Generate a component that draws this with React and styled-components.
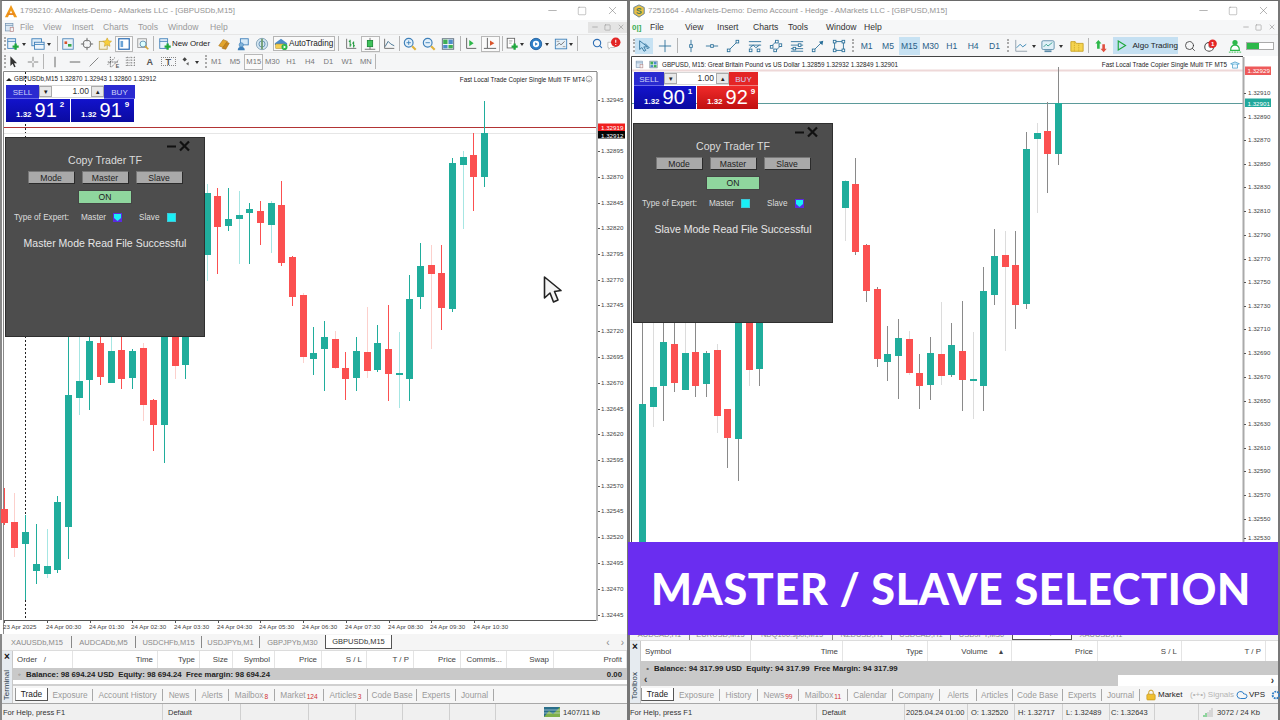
import React from 'react'
import styled, { createGlobalStyle } from 'styled-components'
import { Minus, Square, X, Search, Cloud } from 'lucide-react'

const TEAL = '#20ad9c'
const RED = '#fb5050'
const TEAL_PALE = '#a6e6e3'
const RED_PALE = '#fcd0cc'

// candle rows are [x, high, low, bodyTop, bodyBottom, up?, pale wick?], read off 3x crops
const fromCrop = (rows, ox, oy) => rows.map(([x, h, l, t, b, up, pale]) => ({
  x: ox + x / 3, h: oy + h / 3, l: oy + l / 3, t: oy + t / 3, b: oy + b / 3, up: !!up, pale: !!pale,
}))

const leftEarly = fromCrop([
  [12, 474, 584, 536, 578, 0, 0], [44, 488, 682, 576, 654, 0, 1], [77, 556, 810, 606, 642, 1, 0],
  [109, 582, 762, 702, 722, 1, 0], [141, 598, 744, 708, 732, 1, 1], [173, 498, 728, 516, 720, 1, 0],
  [205, -20, 686, 196, 590, 1, 0], [237, -20, 256, 152, 204, 1, 1], [269, -20, 240, 34, 150, 1, 0],
  [301, -20, 164, 38, 140, 0, 0], [333, -20, 158, 62, 158, 1, 1], [365, -20, 178, 60, 148, 0, 0],
  [397, 56, 178, 62, 144, 1, 0], [429, 40, 272, 54, 226, 0, 1], [461, 208, 364, 210, 284, 0, 0],
  [493, -20, 398, -20, 286, 1, 0], [525, -20, 148, -20, 108, 0, 1], [557, -20, 148, -20, 104, 1, 0],
], 0, 330)

const leftLate = fromCrop([
  [21, 282, 572, 310, 494, 1, 1], [53, 294, 552, 318, 410, 0, 0], [85, 294, 422, 386, 408, 1, 0],
  [117, 304, 522, 374, 386, 1, 1], [149, 340, 522, 356, 370, 1, 0], [181, 334, 466, 362, 398, 0, 0],
  [213, 332, 490, 340, 404, 1, 1], [245, 272, 528, 344, 518, 0, 0], [277, 498, 648, 502, 620, 0, 0],
  [309, 610, 820, 616, 800, 0, 1], [341, 712, 856, 788, 806, 1, 0], [373, 692, 902, 742, 777, 1, 0],
  [405, 724, 838, 747, 833, 0, 1], [437, 786, 930, 834, 867, 0, 0], [469, 742, 904, 782, 864, 1, 0],
  [501, 650, 864, 786, 844, 0, 1], [533, 706, 846, 760, 840, 1, 0], [565, 646, 934, 776, 852, 0, 0],
  [597, 726, 954, 850, 855, 1, 1], [629, 556, 932, 628, 866, 1, 0], [661, 460, 658, 528, 620, 1, 0],
  [693, 464, 778, 526, 552, 0, 1], [725, 464, 720, 550, 654, 0, 0], [757, 204, 666, 220, 658, 1, 0],
  [789, 184, 416, 202, 224, 1, 1], [821, 128, 364, 196, 262, 0, 0], [853, 34, 292, 130, 262, 1, 0],
], 200, 90)

// same bars on the MT5 chart: shifted right and a slightly bigger price scale
const toRight = (y) => 64.7 + 1.148 * (y - 99.7)
const rightEarly = leftEarly.slice(6).map((c) => ({
  ...c, x: c.x + 574, h: toRight(c.h), l: toRight(c.l), t: toRight(c.t), b: toRight(c.b),
}))

const rightLate = fromCrop([
  [15, 360, 543, 364, 443, 1, 1], [47, 294, 585, 372, 576, 0, 0], [79, 552, 726, 556, 692, 0, 0],
  [111, 682, 920, 688, 897, 0, 0], [143, 798, 962, 882, 906, 1, 0], [175, 776, 1016, 834, 888, 1, 0],
  [207, 812, 944, 836, 938, 0, 1], [239, 882, 1048, 940, 978, 0, 0], [271, 830, 1020, 880, 974, 1, 0],
  [303, 726, 974, 882, 948, 0, 1], [335, 790, 952, 854, 946, 1, 0], [367, 724, 1052, 872, 960, 0, 0],
  [399, 816, 1076, 957, 962, 1, 1], [431, 620, 1052, 694, 978, 1, 0], [463, 506, 736, 588, 704, 1, 0],
  [495, 514, 872, 584, 622, 0, 1], [527, 514, 806, 614, 736, 0, 0], [559, 216, 746, 266, 732, 1, 0],
  [591, 190, 458, 218, 236, 1, 1], [623, 126, 398, 212, 282, 0, 0], [655, 20, 316, 130, 282, 1, 0],
], 840, 60)

const leftPrices = [
  ['1.32945', 100], ['1.32895', 151], ['1.32870', 177], ['1.32845', 203], ['1.32820', 228], ['1.32795', 254],
  ['1.32770', 280], ['1.32745', 305], ['1.32720', 331], ['1.32695', 357], ['1.32670', 383], ['1.32645', 409],
  ['1.32620', 434], ['1.32595', 460], ['1.32570', 486], ['1.32545', 511], ['1.32520', 537], ['1.32495', 563],
  ['1.32470', 589], ['1.32445', 615],
]
const rightPrices = [
  ['1.32910', 93], ['1.32890', 117], ['1.32870', 140], ['1.32850', 164], ['1.32830', 187], ['1.32810', 211],
  ['1.32790', 235], ['1.32770', 259], ['1.32750', 282], ['1.32730', 306], ['1.32710', 329], ['1.32690', 353],
  ['1.32670', 377], ['1.32650', 401], ['1.32630', 424], ['1.32610', 448], ['1.32590', 471], ['1.32570', 495],
  ['1.32550', 519], ['1.32530', 538],
]
const leftTimes = [
  ['23 Apr 2025', 3], ['24 Apr 00:30', 46], ['24 Apr 01:30', 89], ['24 Apr 02:30', 131], ['24 Apr 03:30', 174],
  ['24 Apr 04:30', 217], ['24 Apr 05:30', 259], ['24 Apr 06:30', 302], ['24 Apr 07:30', 345], ['24 Apr 08:30', 388],
  ['24 Apr 09:30', 430], ['24 Apr 10:30', 473],
]

const stroke = { fill: 'none', stroke: 'currentColor' }
const pts = (list) => list.map(([x, y], i) => <rect key={i} x={x - 1.5} y={y - 1.5} width="3" height="3" fill="#fff" stroke="currentColor" />)

const ICONS = {
  logoA: <><path d="M8 1 L15 15 H11.5 L8 7.5 L4.5 15 H1 Z" fill="#f09a1a" /><path d="M4 10.5 h8 v2 h-8z" fill="#e8821a" /></>,
  logoS: <><path d="M8 1 L14 4 V11 L8 15 L2 11 V4 Z" fill="#e8c046" stroke="#5d7f9a" /><text x="8" y="11.5" fontSize="10" fontWeight="700" textAnchor="middle" fill="#4b7a5a">S</text></>,
  menuDoc: <><rect x="2" y="2" width="11" height="11" fill="#dbe8f3" stroke="#6f8fae" /><path d="M2 5h11" stroke="#6f8fae" /><rect x="9" y="8" width="5" height="6" fill="#f3f3f3" stroke="#b88" /></>,
  newChart: <><rect x="2" y="2" width="9" height="11" fill="#eaf3fb" stroke="#3e7fb8" /><path d="M2 5h9" stroke="#3e7fb8" /><path d="M11 7.5v7M7.5 11h7" stroke="#1ea83c" strokeWidth="2.6" /></>,
  profiles: <><rect x="1" y="2" width="11" height="8" fill="#dcebf7" stroke="#3e7fb8" /><rect x="4" y="6" width="11" height="8" fill="#eef6fc" stroke="#3e7fb8" /><path d="M4 8.5h11" stroke="#3e7fb8" /></>,
  market: <><rect x="2" y="2" width="12" height="12" fill="#e8f1f8" stroke="#4d86b8" /><rect x="4" y="5" width="3" height="3" fill="#d9542b" /><rect x="8" y="8" width="4" height="3" fill="#38a84a" /></>,
  crosshair: <g {...stroke} color="#666"><circle cx="8" cy="8" r="4.5" /><path d="M8 1v4M8 11v4M1 8h4M11 8h4" /></g>,
  navigator: <><rect x="1.5" y="5" width="9" height="9" fill="#f5f0d8" stroke="#b9a35a" /><path d="M10.5 1l1.6 3.4 3.4.4-2.5 2.4.7 3.5-3.2-1.8-3.2 1.8.7-3.5L5.5 4.8l3.4-.4z" fill="#f7cf3d" stroke="#c79a1e" strokeWidth=".6" /></>,
  terminal: <><rect x="2" y="2" width="12" height="12" fill="#fff" stroke="#2f6fb5" strokeWidth="1.4" /><rect x="4" y="4.5" width="3" height="7" fill="#6aa3d6" /></>,
  tester: <><rect x="2" y="2" width="10" height="10" fill="#f0f0f0" stroke="#999" /><circle cx="8" cy="8" r="3.4" fill="#dff" stroke="#5c8fb0" /><path d="M10.5 10.5l3.5 3.5" stroke="#d6a73a" strokeWidth="2" /></>,
  gold: <><path d="M2 10l5-7 5 2-5 7z" fill="#e3a52e" stroke="#a8721a" strokeWidth=".7" /><path d="M6 13l5-7 3 1-4 7z" fill="#c9861e" stroke="#a8721a" strokeWidth=".7" /></>,
  chat: <><rect x="5" y="2" width="9" height="7" fill="#d6e9f7" stroke="#3e7fb8" /><circle cx="6" cy="9" r="2.5" fill="#7fb2d9" stroke="#3e7fb8" strokeWidth=".7" /><path d="M2 15c0-3 2-4 4-4s4 1 4 4z" fill="#3e7fb8" /></>,
  signal: <><circle cx="8" cy="8" r="6.5" fill="#d4e6f2" stroke="#7f9fb5" /><circle cx="8" cy="8" r="3.5" fill="none" stroke="#5b8ab0" /><path d="M8 2v12" stroke="#6d9a6d" strokeWidth="2" /></>,
  auto: <><path d="M1 7l7-5 7 5v2H1z" fill="#4d8cc9" /><rect x="2" y="8" width="10" height="5" fill="#f3cf55" stroke="#b08a20" strokeWidth=".6" /><circle cx="12" cy="11.5" r="3.5" fill="#2db84a" /><path d="M11 9.8l2.8 1.7-2.8 1.7z" fill="#fff" /></>,
  bars: <><path d="M3 2v11h11" fill="none" stroke="#666" /><path d="M7 3v8M5.5 5H7M7 9h1.5M11 5v7M9.5 7H11M11 10h1.5" stroke="#1f9a3c" strokeWidth="1.2" fill="none" /></>,
  candles: <><path d="M2 14h12M8 1v13" stroke="#666" fill="none" /><rect x="5" y="4" width="6" height="7" fill="#3fc25a" stroke="#1d8a38" /></>,
  line: <><path d="M3 2v11h11" fill="none" stroke="#666" /><path d="M3.5 11 L7 5 L10 8 L14 10" fill="none" stroke="#3a6a8a" /></>,
  zoomIn: <><circle cx="6.5" cy="6.5" r="5" fill="#e3f1fb" stroke="#3e7fb8" strokeWidth="1.3" /><path d="M4 6.5h5M6.5 4v5" stroke="#3e7fb8" /><path d="M10.5 10.5l4 4" stroke="#e0b23a" strokeWidth="2.4" /></>,
  zoomOut: <><circle cx="6.5" cy="6.5" r="5" fill="#e3f1fb" stroke="#3e7fb8" strokeWidth="1.3" /><path d="M4 6.5h5" stroke="#3e7fb8" /><path d="M10.5 10.5l4 4" stroke="#e0b23a" strokeWidth="2.4" /></>,
  tile: <><rect x="1.5" y="2" width="13" height="12" fill="#fff" stroke="#567" /><rect x="2.5" y="3" width="5" height="5" fill="#3fae55" /><rect x="8.5" y="3" width="5" height="5" fill="#4d8cc9" /><rect x="2.5" y="9" width="5" height="4" fill="#4d8cc9" /><rect x="8.5" y="9" width="5" height="4" fill="#3fae55" /></>,
  scroll: <><path d="M3 1v12h11" fill="none" stroke="#555" /><path d="M6 3.5l5 3.5-5 3.5z" fill="#2db84a" /></>,
  shift: <><path d="M5 1v12h10M1 13h4" fill="none" stroke="#555" /><path d="M8 4l5 3-5 3z" fill="#d9542b" /></>,
  template: <><rect x="2.5" y="1.5" width="8.5" height="11" fill="#fff" stroke="#666" /><path d="M4.5 4.5h4M4.5 7h3" stroke="#999" /><path d="M11 7.5v7M7.5 11h7" stroke="#1ea83c" strokeWidth="2.6" /></>,
  clock: <><circle cx="8" cy="8" r="6.5" fill="#2f7fc7" stroke="#1f5f9f" /><circle cx="8" cy="8" r="3.6" fill="#fff" /><path d="M7 6l3 2-3 2z" fill="#2f7fc7" /></>,
  indicator: <><rect x="1.5" y="2.5" width="13" height="11" fill="#e4eff7" stroke="#3e7fb8" /><path d="M3 10l3-3 2 2 4-4" fill="none" stroke="#666" /><path d="M3 5h3M10 11h3" stroke="#999" /></>,
  alert: <><path d="M1 6h8v6H4l-2 2v-2H1z" fill="#fff" stroke="#bbb" /><circle cx="10" cy="6" r="5.4" fill="#e32626" /><path d="M10 3v3.6M10 8v1" stroke="#fff" strokeWidth="1.2" /></>,
  arrow: <path d="M5 1.5v11l2.6-2.4 1.8 4 1.6-.8-1.8-3.8h3.4z" fill="#333" />,
  cross: <path d="M8 2v5M8 9v5M2 8h5M9 8h5" stroke="#777" fill="none" />,
  vline: <path d="M8 2v12" stroke="#555" fill="none" />,
  hline: <path d="M2 8h12" stroke="#555" fill="none" />,
  trend: <path d="M3 13L13 3" stroke="#777" fill="none" />,
  channel: <><path d="M2 11L10 3M6 14L14 6M5 2v12M2 8h12" stroke="#555" fill="none" strokeDasharray="1.5 1" /><text x="11" y="15" fontSize="6" fontWeight="700" fill="#555">E</text></>,
  fibo: <path d="M2 3h12M2 6h12M2 9h12M2 12h12M4 2v12M8 2v12M12 2v12" stroke="#888" fill="none" strokeDasharray="1.5 1.5" />,
  shapes: <><path d="M4 5l2.5-2.5L9 5 6.5 7.5z" fill="#444" /><path d="M8 10l3-2v4z" fill="#666" /></>,
  blueCursor: <path d="M3 2v10l2.6-2.2L8 14l2-1-2.2-4H12z M9 5l5 5-3 1" fill="#bfe0f4" stroke="#2a6f99" />,
  blueCross: <path d="M8 1v14M1 8h14" stroke="#2a6f99" fill="none" />,
  vPoint: <g color="#2a6f99"><path d="M8 1v14" stroke="currentColor" />{pts([[8, 8]])}</g>,
  hPoint: <g color="#2a6f99"><path d="M1 8h14" stroke="currentColor" />{pts([[8, 8]])}</g>,
  trendPoint: <g color="#2a6f99"><path d="M3 13L13 3" stroke="currentColor" />{pts([[3, 13], [13, 3]])}</g>,
  channelPoint: <g color="#2a6f99"><path d="M1 3h14M1 7h14" stroke="currentColor" /><path d="M2 10l4-3 3 3 4-3" fill="none" stroke="currentColor" />{pts([[3, 13], [12, 13]])}</g>,
  fiboPoint: <g color="#2a6f99"><path d="M2 9L9 2M7 14l7-7" stroke="currentColor" />{pts([[3, 9], [9, 3], [7, 13], [13, 7]])}</g>,
  linesPoint: <g color="#2a6f99"><path d="M1 3h14M1 7h14M1 11h14M1 14h14" stroke="currentColor" />{pts([[11, 7], [5, 11]])}</g>,
  arrowPoint: <g color="#2a6f99"><path d="M3 13L13 3" stroke="currentColor" /><path d="M14 2l-5 1 4 4z" fill="currentColor" />{pts([[3, 13]])}</g>,
  rectPoint: <g color="#2a6f99"><rect x="3" y="3" width="10" height="10" fill="none" stroke="currentColor" />{pts([[3, 3], [13, 3], [3, 13], [13, 13]])}</g>,
  chartLine: <><path d="M2 1v13h13" fill="none" stroke="#8a9aa8" /><path d="M3 10l4-4 3 3 4-3" fill="none" stroke="#2a7fb0" /></>,
  chartBox: <><rect x="1" y="2" width="14" height="10" rx="1.5" fill="#e0f0f7" stroke="#5a8aa8" /><path d="M3 9l3-3 2 2 5-4" fill="none" stroke="#2f9a8a" /><path d="M4 14h8" stroke="#5a8aa8" strokeWidth="2" /></>,
  folder: <><path d="M1 3h5l1 2h8v9H1z" fill="#f5d44f" stroke="#c7a022" /><path d="M5 3v11M10 5v9" stroke="#c7a022" strokeDasharray="1 1" /></>,
  updown: <><path d="M5 1l3.5 4H6.5v6H3.5V5H1.5z" fill="#2db84a" /><path d="M11 15l-3.5-4h2V6h3v5h2z" fill="#e05040" /></>,
  playOut: <path d="M4 2.5l9 5.5-9 5.5z" fill="none" stroke="#1ea83c" strokeWidth="1.4" />,
  bell: <><circle cx="7" cy="9" r="5" fill="#fff" stroke="#444" strokeWidth="1.2" /><path d="M7 6.5V9l2 1" fill="none" stroke="#444" /><circle cx="11" cy="5.5" r="4.8" fill="#e32626" /><text x="11" y="8" fontSize="7" fontWeight="700" textAnchor="middle" fill="#fff">1</text></>,
  user: <><circle cx="8" cy="4" r="3" fill="#2db84a" /><path d="M3 13c0-4 2-6 5-6s5 2 5 6z" fill="#fff" stroke="#2db84a" strokeWidth="1.4" /><path d="M1 15h14" stroke="#2db84a" strokeDasharray="2 1" /></>,
  hat: <><path d="M1 6l7-3 7 3-7 3z" fill="#bfe3f5" stroke="#2f8fc0" /><path d="M4 8v5h8V8" fill="#eef8fd" stroke="#2f8fc0" /></>,
  smile: <g {...stroke} color="#555"><circle cx="8" cy="8" r="6" /><path d="M5 10c1.5 1.5 4.5 1.5 6 0M5.5 6h1M9.5 6h1" /></g>,
  bag: <><path d="M5 7V4.5a3 3 0 0 1 6 0V7" fill="none" stroke="#c79a1e" strokeWidth="1.3" /><rect x="2.5" y="7" width="11" height="7.5" rx="1" fill="#f0c030" stroke="#c79a1e" /></>,
  gear: <circle cx="8" cy="8" r="4.5" fill="none" stroke="#2f7fc7" strokeWidth="2.5" strokeDasharray="2.5 1.2" />,
  traffic: <><rect x="0" y="3" width="16" height="10" fill="#2a6f8a" /><path d="M0 13l5-6 4 3 7-7v10z" fill="#7fb04a" /><path d="M0 6h16M0 9h16" stroke="#d8e8f0" strokeWidth=".6" /></>,
}

const Icon = ({ name, size = 14 }) => (
  <svg width={size} height={size} viewBox="0 0 16 16">{ICONS[name]}</svg>
)

function CandleSet({ data, wickUp, wickDown, paleUp, paleDown }) {
  return data.map((c, i) => {
    const wick = c.pale ? (c.up ? paleUp : paleDown) : (c.up ? wickUp : wickDown)
    const cx = Math.floor(c.x) + 0.5
    const top = Math.round(c.t)
    return (
      <g key={i}>
        <line x1={cx} x2={cx} y1={Math.round(c.h)} y2={Math.round(c.l)} stroke={wick} />
        <rect x={cx - 3.5} y={top} width="7" height={Math.max(Math.round(c.b) - top, 1)} fill={c.up ? TEAL : RED} />
      </g>
    )
  })
}

const Axis = styled.text`
  font-family: "Liberation Sans", Arial, sans-serif;
  font-size: 6.2px;
  fill: ${(p) => p.$fill || '#444'};
`
const ChartText = styled.text`
  font-family: "Liberation Sans", Arial, sans-serif;
  font-size: 6.3px;
  fill: #222;
`

function LeftChart() {
  return (
    <ChartSvg $ml={-2} width="629" height="564" viewBox="0 70 629 564">
      <path d="M3.5 634V71.5H597" fill="none" stroke="#8a8a8a" />
      <line x1="25.5" x2="25.5" y1="72" y2="620" stroke="#222" strokeDasharray="2 2" />
      <line x1="4" x2="597" y1="133.5" y2="133.5" stroke="#e6e6e6" />
      <line x1="4" x2="597" y1="127.5" y2="127.5" stroke="#b23434" />
      <CandleSet data={[...leftEarly, ...leftLate]} wickUp={TEAL} wickDown={RED} paleUp={TEAL_PALE} paleDown={RED_PALE} />
      <rect x="0" y="620" width="3" height="14" fill="#fff" />
      <rect x="4" y="620.5" width="593" height="14" fill="#fff" />
      <line x1="4" x2="598" y1="620.5" y2="620.5" stroke="#555" />
      <line x1="597" x2="597" y1="72" y2="621" stroke="#b8b8b8" strokeWidth="2" />
      {leftPrices.map(([p, y]) => (
        <g key={p}>
          <line x1="598" x2="600" y1={y + 0.5} y2={y + 0.5} stroke="#555" />
          <Axis x="601" y={y + 2.4}>{p}</Axis>
        </g>
      ))}
      {leftTimes.map(([t, x]) => (
        <g key={t}>
          <line x1={x + 1.5} x2={x + 1.5} y1="620" y2="623" stroke="#555" />
          <Axis x={x} y="629">{t}</Axis>
        </g>
      ))}
      <rect x="598" y="123.5" width="27" height="7.5" fill="#f01f1f" />
      <Axis x="601" y="130" $fill="#fff">1.32919</Axis>
      <rect x="598" y="131" width="27" height="7.5" fill="#050505" />
      <Axis x="601" y="137.5" $fill="#fff">1.32912</Axis>
      <path d="M6 81l3-3 3 3z" fill="#222" />
      <ChartText x="14" y="81">GBPUSDb,M15  1.32870 1.32943 1.32860 1.32912</ChartText>
      <ChartText x="585" y="82" textAnchor="end">Fast Local Trade Copier Single Multi TF MT4</ChartText>
      <g transform="translate(585 75)"><Icon name="smile" size={8} /></g>
      <path d="M544.5 277 L544.5 298 L550 293 L553.5 302 L558 300 L554.5 291.5 L561 290.5 Z" fill="#f4f4f4" stroke="#222" strokeWidth="1.6" strokeLinejoin="round" />
    </ChartSvg>
  )
}

function RightChart() {
  return (
    <ChartSvg width="649" height="572" viewBox="630 56 649 572">
      <path d="M631.5 628V56.5H1243" fill="none" stroke="#444" />
      <rect x="632" y="69.5" width="611" height="2" fill="#eed8d8" />
      <line x1="632" x2="1243" y1="103.5" y2="103.5" stroke="#5b9a9a" />
      <CandleSet data={[...rightEarly, ...rightLate]} wickUp="#8a8a8a" wickDown="#8a8a8a" paleUp="#dcdcdc" paleDown="#dcdcdc" />
      <line x1="1243.5" x2="1243.5" y1="57" y2="628" stroke="#aaa" strokeWidth="2" />
      {rightPrices.map(([p, y]) => (
        <g key={p}>
          <line x1="1244" x2="1246" y1={y + 0.5} y2={y + 0.5} stroke="#555" />
          <Axis x="1248" y={y + 2.4}>{p}</Axis>
        </g>
      ))}
      <rect x="1245" y="66.5" width="26" height="8.5" fill="#ee5a5a" />
      <Axis x="1247.5" y="73" $fill="#fff">1.32929</Axis>
      <rect x="1245" y="98.5" width="26" height="8.5" fill="#20a89b" />
      <Axis x="1247.5" y="105.5" $fill="#fff">1.32901</Axis>
      <g transform="translate(635 60)"><Icon name="menuDoc" size={9} /></g>
      <g transform="translate(649 60)"><Icon name="tile" size={9} /></g>
      <ChartText x="662" y="67">GBPUSD, M15:  Great Britain Pound vs US Dollar  1.32859 1.32932 1.32849 1.32901</ChartText>
      <ChartText x="1227" y="67" textAnchor="end">Fast Local Trade Copier Single Multi TF MT5</ChartText>
      <g transform="translate(1230 60)"><Icon name="hat" size={10} /></g>
    </ChartSvg>
  )
}

function TradeBox({ x, y, sellTab, buyTab, step, sell, buy, sellW, buyW, buyRed }) {
  return (
    <TradeWrap $x={x} $y={y}>
      <TradeTop>
        <SideTab $w={sellTab}>SELL</SideTab>
        <Stepper $w={step}>
          <StepBtn>▾</StepBtn>
          <StepVal>1.00</StepVal>
          <StepBtn>▴</StepBtn>
        </Stepper>
        <SideTab $w={buyTab} $red={buyRed}>BUY</SideTab>
      </TradeTop>
      <TradeBottom>
        <PriceCell $w={sellW}><small>1.32</small><big>{sell[0]}</big><sup>{sell[1]}</sup></PriceCell>
        <PriceCell $w={buyW} $red={buyRed}><small>1.32</small><big>{buy[0]}</big><sup>{buy[1]}</sup></PriceCell>
      </TradeBottom>
    </TradeWrap>
  )
}

const Mark = ({ on }) => (
  <svg width="9" height="9" viewBox="0 0 9 9">
    <rect width="9" height="9" fill={on ? '#5a2be0' : '#3ec8d8'} />
    {on
      ? <path d="M1 1h7v4L4.5 8 1 5z" fill="#19f0f5" />
      : <rect x="1" y="1" width="7" height="7" fill="#19f0f5" />}
  </svg>
)

function CopyPanel({ x, y, mode }) {
  const master = mode === 'Master'
  return (
    <Panel $x={x} $y={y}>
      <PanelHead>
        <svg width="24" height="12" viewBox="0 0 24 12">
          <path d="M0 6.5h9" stroke="#111" strokeWidth="2" />
          <path d="M13 1.5l9 9M22 1.5l-9 9" stroke="#111" strokeWidth="2.2" />
        </svg>
      </PanelHead>
      <PanelTitle>Copy Trader TF</PanelTitle>
      <PanelBtns>
        <PanelBtn>Mode</PanelBtn>
        <PanelBtn>Master</PanelBtn>
        <PanelBtn>Slave</PanelBtn>
      </PanelBtns>
      <OnBtn>ON</OnBtn>
      <TypeRow>
        <TypeLabel $w={67}>Type of Expert:</TypeLabel>
        <TypeLabel $w={32}>Master</TypeLabel>
        <Mark on={master} />
        <TypeLabel $w={28} $ml={17}>Slave</TypeLabel>
        <Mark on={!master} />
      </TypeRow>
      <PanelMsg>{mode} Mode Read File Successful</PanelMsg>
    </Panel>
  )
}

const Tool = ({ i, w = 19, on, ml, blue }) => (
  <ToolBtn $w={w} $on={on} $ml={ml} $blue={blue}><Icon name={i} /></ToolBtn>
)

const WinButtons = () => (
  <WinControls>
    <WinBtn><Minus size={13} strokeWidth={1} /></WinBtn>
    <WinBtn><Square size={10} strokeWidth={1} /></WinBtn>
    <WinBtn><X size={13} strokeWidth={1} /></WinBtn>
  </WinControls>
)

const leftTabs = [['Exposure', 45], ['Account History', 70], ['News', 33], ['Alerts', 33], ['Mailbox', 46, '8'], ['Market', 49, '124'], ['Articles', 44, '3'], ['Code Base', 49], ['Experts', 39], ['Journal', 38]]
const rightTabs = [['Exposure', 46], ['History', 38], ['News', 41, '99'], ['Mailbox', 49, '11'], ['Calendar', 45], ['Company', 47], ['Alerts', 37], ['Articles', 36], ['Code Base', 50], ['Experts', 39], ['Journal', 38]]

function TermTabs({ tabs, pad, children }) {
  return (
    <TermTabRow $pad={pad}>
      <TermTab $on $w={33}>Trade</TermTab>
      {tabs.map(([t, w, badge]) => (
        <TermTab key={t} $w={w}>{t}{badge && <Badge>{badge}</Badge>}</TermTab>
      ))}
      {children}
    </TermTabRow>
  )
}

const leftCols = [['Order   /', 60, 'left'], ['Time', 85], ['Type', 42], ['Size', 33], ['Symbol', 42], ['Price', 47], ['S / L', 45], ['T / P', 47], ['Price', 47], ['Commis...', 46], ['Swap', 47], ['Profit', 73]]
const rightCols = [['Symbol', 110, 'left'], ['Time', 92], ['Type', 85], ['Volume     ▴  ', 84], ['Price', 86], ['S / L', 84], ['T / P', 84]]

const HeadRow = ({ cols, h }) => (
  <TermHead $h={h}>
    {cols.map(([t, w, align], i) => <HeadCell key={i} $w={w} $left={align === 'left'}>{t}</HeadCell>)}
  </TermHead>
)

export default function App() {
  return (
    <Desktop>
      <GlobalStyle />
      <Win $w={629}>
        <TitleBar>
          <Icon name="logoA" size={14} />
          <TitleText>1795210: AMarkets-Demo - AMarkets LLC - [GBPUSDb,M15]</TitleText>
          <WinButtons />
        </TitleBar>
        <MenuBar>
          <Icon name="menuDoc" size={11} />
          <MenuItem $ml={5} $w={23}>File</MenuItem><MenuItem $w={29}>View</MenuItem><MenuItem $w={31}>Insert</MenuItem>
          <MenuItem $w={35}>Charts</MenuItem><MenuItem $w={30}>Tools</MenuItem><MenuItem $w={42}>Window</MenuItem><MenuItem $w={30}>Help</MenuItem>
          <Mdi>
            <MdiBtn $dark><Minus size={8} /></MdiBtn><MdiBtn $dark><Square size={7} /></MdiBtn><MdiBtn $dark><X size={8} /></MdiBtn>
          </Mdi>
        </MenuBar>
        <ToolRow $h={18}>
          <Grip />
          <Tool i="newChart" w={14} /><Caret />
          <Tool i="profiles" w={14} ml={3} /><Caret />
          <Sep $l={4} $r={1} />
          <Tool i="market" w={18.6} /><Tool i="crosshair" w={18.6} /><Tool i="navigator" w={18.6} /><Tool i="terminal" w={18.6} on /><Tool i="tester" w={18.6} />
          <Sep $l={1} $r={4} />
          <Tool i="newChart" w={14} /><ToolLabel $w={43}>New Order</ToolLabel>
          <Tool i="gold" /><Tool i="chat" /><Tool i="signal" />
          <AutoBtn><Icon name="auto" /><span>AutoTrading</span></AutoBtn>
          <Sep $l={3} $r={3} />
          <Tool i="bars" /><Tool i="candles" on /><Tool i="line" />
          <Sep $l={0} $r={1} />
          <Tool i="zoomIn" /><Tool i="zoomOut" /><Tool i="tile" />
          <Sep $l={2} $r={1} />
          <Tool i="scroll" /><Tool i="shift" on />
          <Sep $l={2} $r={3} />
          <Tool i="template" w={13} /><Caret $w={6} />
          <Tool i="clock" w={13} ml={5} /><Caret />
          <Tool i="indicator" w={13} ml={4} /><Caret $w={7} />
          <Sep $l={2} $r={0} />
          <RightTools>
            <IconSlot $w={16}><Search size={11} color="#2f6fb5" strokeWidth={2.4} /></IconSlot>
            <Tool i="alert" w={18} />
          </RightTools>
        </ToolRow>
        <ToolRow $h={18}>
          <Grip />
          <Tool i="arrow" w={14} /><Tool i="cross" ml={3.5} />
          <Sep $l={0} $r={2} />
          <Tool i="vline" /><Tool i="hline" ml={1} /><Tool i="trend" /><Tool i="channel" w={18} /><Tool i="fibo" />
          <LetterBtn>A</LetterBtn>
          <LetterBtn $box>T</LetterBtn>
          <Tool i="shapes" w={15} ml={0.5} /><Caret $w={7} />
          <Grip $ml={5} />
          {['M1', 'M5', 'M15', 'M30', 'H1', 'H4', 'D1', 'W1', 'MN'].map((p) => (
            <Period key={p} $w={18.7} $on={p === 'M15'}>{p}</Period>
          ))}
          <Sep $l={0} $r={0} />
        </ToolRow>
        <ChartArea>
          <LeftChart />
          <TradeBox x={4} y={15} sellTab={33} step={65} buyTab={31} sellW={64} buyW={63} sell={['91', '2']} buy={['91', '9']} />
          <CopyPanel x={3} y={67} mode="Master" />
        </ChartArea>
        <SymbolTabs $h={17}>
          <SymbolTab $w={69} $ml={1}>XAUUSDb,M15</SymbolTab>
          <SymbolTab $w={64}>AUDCADb,M5</SymbolTab>
          <SymbolTab $w={66}>USDCHFb,M15</SymbolTab>
          <SymbolTab $w={58}>USDJPYb,M1</SymbolTab>
          <SymbolTab $w={65} $plain>GBPJPYb,M30</SymbolTab>
          <SymbolTab $w={67} $on>GBPUSDb,M15</SymbolTab>
          <TabArrows>‹&nbsp;&nbsp;&nbsp;&nbsp;›</TabArrows>
        </SymbolTabs>
        <TermBody>
          <SideBar $w={9}>×<SideLabel>Terminal</SideLabel></SideBar>
          <TermMain>
            <HeadRow cols={leftCols} h={17} />
            <BalanceRow $h={12}>
              <Dot $w={13}>◦</Dot>Balance: 98 694.24 USD&nbsp; Equity: 98 694.24&nbsp; Free margin: 98 694.24
              <BalanceEnd>0.00</BalanceEnd>
            </BalanceRow>
            <TermGap />
            <TermTabs tabs={leftTabs} pad={2} />
          </TermMain>
        </TermBody>
        <StatusBar>
          <StatusCell $w={161} $pad={1}>For Help, press F1</StatusCell>
          <StatusCell $w={78} $pad={5}>Default</StatusCell>
          <StatusCell $w={68} /><StatusCell $w={47} /><StatusCell $w={47} /><StatusCell $w={47} /><StatusCell $w={46} />
          <StatusLast><Icon name="traffic" size={16} /><span>1407/11 kb</span></StatusLast>
        </StatusBar>
      </Win>

      <Win $w={651} $right>
        <TitleBar>
          <Icon name="logoS" size={14} />
          <TitleText>7251664 - AMarkets-Demo: Demo Account - Hedge - AMarkets LLC - [GBPUSD,M15]</TitleText>
          <WinButtons />
        </TitleBar>
        <MenuBar $dark>
          <MenuLogo>0|]</MenuLogo>
          <MenuItem $ml={7} $w={35}>File</MenuItem><MenuItem $w={32}>View</MenuItem><MenuItem $w={36}>Insert</MenuItem>
          <MenuItem $w={35}>Charts</MenuItem><MenuItem $w={38}>Tools</MenuItem><MenuItem $w={38}>Window</MenuItem><MenuItem $w={30}>Help</MenuItem>
          <Mdi><MdiBtn><Minus size={8} /></MdiBtn><MdiBtn><Square size={7} /></MdiBtn><MdiBtn><X size={8} /></MdiBtn></Mdi>
        </MenuBar>
        <ToolRow $h={22} $pad={2}>
          <Grip $mr={0} />
          <Tool i="blueCursor" w={18} blue /><Tool i="blueCross" w={21} ml={1.5} />
          <Sep $l={1} $r={3} />
          <Tool i="vPoint" w={21.2} /><Tool i="hPoint" w={21.2} /><Tool i="trendPoint" w={21.2} /><Tool i="channelPoint" w={21.2} />
          <Tool i="fiboPoint" w={21.2} /><Tool i="linesPoint" w={21.2} /><Tool i="arrowPoint" w={21.2} /><Tool i="rectPoint" w={21.2} />
          <Grip $ml={2} $mr={2} />
          {['M1', 'M5', 'M15', 'M30', 'H1', 'H4', 'D1'].map((p) => (
            <Period key={p} $big $w={21.3} $blue={p === 'M15'}>{p}</Period>
          ))}
          <Grip $ml={2} />
          <Tool i="chartLine" w={16} ml={4.4} /><Caret $w={10} />
          <Tool i="chartBox" w={16} ml={1} /><Caret $w={10} />
          <Tool i="folder" w={18} ml={2} />
          <Sep $l={2} $r={3} />
          <Tool i="updown" w={18} />
          <AlgoBtn><Icon name="playOut" size={13} /><span>Algo Trading</span></AlgoBtn>
          <IconSlot $w={24}><Search size={12} color="#333" strokeWidth={1.6} /></IconSlot>
          <Tool i="bell" w={16} />
          <Tool i="user" w={18} ml={8} />
          <Meter><MeterFill /></Meter>
        </ToolRow>
        <ChartArea>
          <RightChart />
          <TradeBox x={4} y={16} sellTab={30} step={65} buyTab={29} sellW={62} buyW={61} buyRed sell={['90', '1']} buy={['92', '9']} />
          <CopyPanel x={3} y={67} mode="Slave" />
        </ChartArea>
        <SymbolTabs $h={13} $low>
          <SymbolTab $w={60}>AUDCAD,H1</SymbolTab>
          <SymbolTab $w={62}>EURUSD,M15</SymbolTab>
          <SymbolTab $w={81}>NDQ100.spot,M15</SymbolTab>
          <SymbolTab $w={59}>NZDUSD,H1</SymbolTab>
          <SymbolTab $w={59}>USDCAD,H1</SymbolTab>
          <SymbolTab $w={61} $plain>USDJPY,M30</SymbolTab>
          <SymbolTab $w={60} $on>GBPUSD,M15</SymbolTab>
          <SymbolTab $w={58} $plain>XAUUSD,H1</SymbolTab>
        </SymbolTabs>
        <TermBody>
          <SideBar $w={10}>×<SideLabel>Toolbox</SideLabel></SideBar>
          <TermMain>
            <HeadRow cols={rightCols} h={20} />
            <BalanceRow $h={14}>
              <Dot $w={13}>•</Dot>Balance: 94 317.99 USD&nbsp; Equity: 94 317.99&nbsp; Free Margin: 94 317.99
            </BalanceRow>
            <ScrollRow>
              <ScrollThumb>‹</ScrollThumb>
              <ScrollEnd>›</ScrollEnd>
            </ScrollRow>
            <TermTabs tabs={rightTabs} pad={0}>
              <ExtraLinks>
                <ExtraLink $w={45}><Icon name="bag" size={12} /><b>Market</b></ExtraLink>
                <ExtraLink $w={46} $faint>(•+•) Signals</ExtraLink>
                <ExtraLink $w={34}><Cloud size={12} color="#2f7fc7" /><b>VPS</b></ExtraLink>
                <Icon name="gear" size={12} />
              </ExtraLinks>
            </TermTabs>
          </TermMain>
        </TermBody>
        <StatusBar>
          <StatusCell $w={187} $pad={0}>For Help, press F1</StatusCell>
          <StatusCell $w={88} $pad={5}>Default</StatusCell>
          <StatusCell $w={63} $pad={1}>2025.04.24 01:00</StatusCell>
          <StatusCell $w={47}>O: 1.32520</StatusCell>
          <StatusCell $w={48}>H: 1.32717</StatusCell>
          <StatusCell $w={47}>L: 1.32489</StatusCell>
          <StatusCell $w={45} $pad={1}>C: 1.32643</StatusCell>
          <StatusCell $w={44} />
          <StatusLast $start>
            <svg width="11" height="9" viewBox="0 0 11 9"><path d="M1 9V7M3 9V5" stroke="#2db84a" /><path d="M5 9V4M7 9V2M9 9V0" stroke="#bbb" /></svg>
            <span>3072 / 24 Kb</span>
          </StatusLast>
        </StatusBar>
      </Win>

      <Banner>MASTER / SLAVE SELECTION</Banner>
    </Desktop>
  )
}

const GlobalStyle = createGlobalStyle`
  html, body {
    margin: 0;
    padding: 0;
    width: 1280px;
    height: 720px;
    overflow: hidden;
    background: #fff;
    font-family: "Liberation Sans", Arial, sans-serif;
  }
`

const Desktop = styled.div`
  position: relative;
  display: flex;
  width: 1280px;
  height: 720px;
  overflow: hidden;
  font-size: 9px;
  color: #555;
`

const Win = styled.div`
  display: flex;
  flex-direction: column;
  width: ${(p) => p.$w}px;
  height: 720px;
  box-sizing: border-box;
  border-top: 1px solid #6a6a6a;
  border-left: ${(p) => (p.$right ? '1px solid #777' : '2px solid #888')};
  border-right: 2px solid #777;
`

const TitleBar = styled.div`
  display: flex;
  align-items: center;
  flex: 0 0 19px;
  padding-left: 2px;
  background: #fff;
`

const TitleText = styled.span`
  margin-left: 2px;
  font-size: 7.9px;
  color: #949494;
  white-space: nowrap;
`

const WinControls = styled.div`
  display: flex;
  margin-left: auto;
  color: #777;
`

const WinBtn = styled.span`
  display: flex;
  align-items: center;
  justify-content: center;
  width: 30px;
`

const MenuBar = styled.div`
  display: flex;
  align-items: center;
  flex: 0 0 14px;
  padding-left: 2px;
  background: #f6f7f8;
  color: ${(p) => (p.$dark ? '#333' : '#9a9a9a')};
`

const MenuLogo = styled.span`
  font-size: 8px;
  color: #3fae55;
  font-weight: 700;
  width: 11px;
`

const MenuItem = styled.span`
  width: ${(p) => p.$w}px;
  margin-left: ${(p) => p.$ml || 0}px;
  font-size: 8.6px;
`

const Mdi = styled.div`
  display: flex;
  margin-left: auto;
  height: 100%;
  align-items: center;
`

const MdiBtn = styled.span`
  display: flex;
  align-items: center;
  justify-content: center;
  width: 13px;
  height: 11px;
  color: #999;
  background: ${(p) => (p.$dark ? '#e4e4e4' : 'transparent')};
`

const ToolRow = styled.div`
  display: flex;
  align-items: center;
  flex: 0 0 ${(p) => p.$h}px;
  padding-left: ${(p) => p.$pad || 1}px;
  background: #f5f6f7;
  border-top: 1px solid #e6e6e6;
  box-sizing: border-box;
`

const Grip = styled.i`
  flex: 0 0 2px;
  height: 13px;
  margin: 0 ${(p) => p.$mr || 0}px 0 ${(p) => p.$ml || 1}px;
  border-left: 2px dotted #aaa;
  box-sizing: border-box;
`

const ToolBtn = styled.span`
  display: flex;
  align-items: center;
  justify-content: center;
  flex: 0 0 ${(p) => p.$w}px;
  min-width: 0;
  height: 16px;
  margin-left: ${(p) => p.$ml || 0}px;
  box-sizing: border-box;
  border: 1px solid ${(p) => (p.$on ? '#b8b8b8' : 'transparent')};
  background: ${(p) => (p.$blue ? '#c7e2f3' : p.$on ? '#fafafa' : 'transparent')};
  svg {
    flex: none;
  }
`

const IconSlot = styled.span`
  display: flex;
  align-items: center;
  justify-content: center;
  flex: 0 0 ${(p) => p.$w}px;
`

const Caret = styled.span`
  flex: 0 0 ${(p) => p.$w || 8}px;
  display: flex;
  align-items: center;
  justify-content: center;
  &::after {
    content: "";
    border: 2.5px solid transparent;
    border-top: 3px solid #333;
    margin-top: 3px;
  }
`

const Sep = styled.i`
  flex: 0 0 1px;
  height: 15px;
  margin: 0 ${(p) => p.$r}px 0 ${(p) => p.$l}px;
  background: #b5b5b5;
`

const ToolLabel = styled.span`
  flex: 0 0 ${(p) => p.$w}px;
  font-size: 7.9px;
  color: #222;
  white-space: nowrap;
`

const AutoBtn = styled.span`
  display: flex;
  align-items: center;
  gap: 1px;
  flex: 0 0 62px;
  height: 15px;
  margin-left: 1px;
  box-sizing: border-box;
  border: 1px solid #b5b5b5;
  background: #fafafa;
  color: #222;
  font-size: 8.2px;
  white-space: nowrap;
  overflow: hidden;
`

const RightTools = styled.div`
  display: flex;
  align-items: center;
  margin-left: auto;
  padding-right: 4px;
`

const LetterBtn = styled.span`
  display: flex;
  align-items: center;
  justify-content: center;
  flex: 0 0 18.5px;
  height: 13px;
  font-size: 9px;
  font-weight: 700;
  color: #555;
  ${(p) => p.$box && `
    outline: 1px dotted #888;
    outline-offset: -3px;
  `}
`

const Period = styled.span`
  display: flex;
  align-items: center;
  justify-content: center;
  flex: 0 0 ${(p) => p.$w}px;
  height: ${(p) => (p.$big ? 18 : 16)}px;
  box-sizing: border-box;
  font-size: ${(p) => (p.$big ? 8.6 : 7.6)}px;
  color: ${(p) => (p.$big ? '#2a5f88' : '#777')};
  border: 1px solid ${(p) => (p.$on ? '#b8b8b8' : 'transparent')};
  background: ${(p) => (p.$blue ? '#c7e2f3' : p.$on ? '#fafafa' : 'transparent')};
`

const AlgoBtn = styled.span`
  display: flex;
  align-items: center;
  gap: 4px;
  flex: 0 0 65px;
  height: 17px;
  margin-left: 3px;
  box-sizing: border-box;
  padding-left: 2px;
  background: #c5e0f2;
  color: #222;
  font-size: 8.1px;
  white-space: nowrap;
`

const Meter = styled.span`
  display: flex;
  flex: 0 0 28px;
  height: 8px;
  margin-left: 2px;
  box-sizing: border-box;
  border: 1px solid #aaa;
  background: #fff;
`

const MeterFill = styled.span`
  width: 12px;
  background: #2db84a;
`

const ChartArea = styled.div`
  position: relative;
  flex: 1 1 0;
  min-height: 0;
  background: #fff;
`

const ChartSvg = styled.svg`
  display: block;
  margin-left: ${(p) => p.$ml || 0}px;
`

const TradeWrap = styled.div`
  position: absolute;
  left: ${(p) => p.$x}px;
  top: ${(p) => p.$y}px;
`

const TradeTop = styled.div`
  display: flex;
  height: 14px;
`

const TradeBottom = styled.div`
  display: flex;
  gap: 1px;
  height: 23px;
`

const SideTab = styled.div`
  display: flex;
  justify-content: center;
  align-items: center;
  width: ${(p) => p.$w}px;
  background: ${(p) => (p.$red ? '#e42525' : '#2a2ad0')};
  color: #cfd4f7;
  font-size: 8px;
  box-shadow: inset 0 -1px 0 ${(p) => (p.$red ? '#f08080' : '#6a6ae8')};
`

const Stepper = styled.div`
  display: flex;
  width: ${(p) => p.$w}px;
  height: 13px;
  background: #d8d8d8;
  padding: 1px 0;
  box-sizing: border-box;
`

const StepBtn = styled.span`
  flex: 0 0 13px;
  display: flex;
  align-items: center;
  justify-content: center;
  font-size: 7px;
  color: #222;
  background: #e8e8e8;
  border: 1px solid #aaa;
  box-sizing: border-box;
`

const StepVal = styled.span`
  flex: 1;
  background: #fff;
  color: #333;
  font-size: 8.5px;
  text-align: right;
  padding-right: 2px;
  line-height: 11px;
`

const PriceCell = styled.div`
  display: flex;
  align-items: baseline;
  width: ${(p) => p.$w}px;
  box-sizing: border-box;
  padding-left: 10px;
  color: #fff;
  background: ${(p) => (p.$red
    ? 'linear-gradient(#f02a2a, #c01010)'
    : 'linear-gradient(#1313cc, #0a0aa0)')};
  small {
    font-size: 8px;
    font-weight: 700;
    margin-right: 3px;
  }
  big {
    font-size: 20px;
    line-height: 23px;
  }
  sup {
    align-self: flex-start;
    font-size: 8px;
    font-weight: 700;
    line-height: 12px;
    margin-left: 3px;
  }
`

const Panel = styled.div`
  position: absolute;
  left: ${(p) => p.$x}px;
  top: ${(p) => p.$y}px;
  width: 200px;
  height: 200px;
  box-sizing: border-box;
  display: flex;
  flex-direction: column;
  align-items: center;
  background: #4d4d4d;
  border: 1px solid #2f2f2f;
  color: #e4e4e4;
`

const PanelHead = styled.div`
  display: flex;
  align-self: flex-end;
  padding: 2px 13px 0 0;
  height: 12px;
`

const PanelTitle = styled.div`
  margin-top: 2px;
  font-size: 10.6px;
  line-height: 13px;
  color: #dcdcdc;
`

const PanelBtns = styled.div`
  display: flex;
  gap: 7px;
  margin-top: 4px;
`

const PanelBtn = styled.div`
  display: flex;
  align-items: center;
  justify-content: center;
  width: 47px;
  height: 13px;
  box-sizing: border-box;
  background: #a9a9a9;
  border: 1px solid #2b2b2b;
  border-top-color: #777;
  border-left-color: #777;
  color: #222;
  font-size: 8.6px;
`

const OnBtn = styled(PanelBtn)`
  width: 54px;
  height: 14px;
  margin-top: 6px;
  background: #8fd69e;
  border-color: #444;
`

const TypeRow = styled.div`
  display: flex;
  align-items: center;
  align-self: flex-start;
  margin: 8px 0 0 8px;
  height: 11px;
`

const TypeLabel = styled.span`
  width: ${(p) => p.$w}px;
  margin-left: ${(p) => p.$ml || 0}px;
  font-size: 8.2px;
  color: #ddd;
  white-space: nowrap;
`

const PanelMsg = styled.div`
  margin-top: 14px;
  font-size: 10.5px;
  color: #e6e6e6;
  white-space: nowrap;
`

const SymbolTabs = styled.div`
  display: flex;
  align-items: ${(p) => (p.$low ? 'flex-end' : 'center')};
  flex: 0 0 ${(p) => p.$h}px;
  background: #f5f5f5;
  box-sizing: border-box;
  border-bottom: 1px solid #dcdcdc;
`

const SymbolTab = styled.span`
  display: flex;
  align-items: center;
  justify-content: center;
  flex: 0 0 ${(p) => p.$w}px;
  margin-left: ${(p) => p.$ml || 0}px;
  height: 12px;
  box-sizing: border-box;
  font-size: 7.5px;
  color: ${(p) => (p.$on ? '#333' : '#8a8a8a')};
  white-space: nowrap;
  ${(p) => (p.$on
    ? 'height: 14px; background: #fff; border: 1px solid #555; border-top: none;'
    : p.$plain ? '' : 'border-right: 1px solid #888;')}
`

const TabArrows = styled.span`
  margin-left: auto;
  padding-right: 3px;
  font-size: 10px;
  color: #888;
`

const TermBody = styled.div`
  display: flex;
  flex: 0 0 auto;
`

const SideBar = styled.div`
  display: flex;
  flex-direction: column;
  align-items: center;
  flex: 0 0 ${(p) => p.$w}px;
  box-sizing: border-box;
  padding-top: 1px;
  background: #e6ebf0;
  color: #111;
  font-size: 10px;
  line-height: 10px;
  font-weight: 700;
  border-right: 1px solid #c8c8c8;
`

const SideLabel = styled.span`
  margin-top: auto;
  margin-bottom: 3px;
  writing-mode: vertical-rl;
  transform: rotate(180deg);
  font-size: 8px;
  font-weight: 400;
  color: #2b3c4c;
`

const TermMain = styled.div`
  flex: 1;
  min-width: 0;
  display: flex;
  flex-direction: column;
`

const TermHead = styled.div`
  display: flex;
  align-items: stretch;
  height: ${(p) => p.$h}px;
  background: #fff;
`

const HeadCell = styled.span`
  display: flex;
  align-items: center;
  justify-content: ${(p) => (p.$left ? 'flex-start' : 'flex-end')};
  flex: 0 0 ${(p) => p.$w}px;
  box-sizing: border-box;
  padding: 0 4px;
  font-size: 7.9px;
  color: #444;
  white-space: pre;
  border-right: 1px solid #e4e4e4;
`

const BalanceRow = styled.div`
  display: flex;
  align-items: center;
  height: ${(p) => p.$h}px;
  background: #c9c9c9;
  color: #222;
  font-size: 7.8px;
  font-weight: 700;
  white-space: pre;
`

const Dot = styled.span`
  width: ${(p) => p.$w}px;
  text-align: center;
  color: #666;
`

const BalanceEnd = styled.span`
  margin-left: auto;
  padding-right: 5px;
`

const TermGap = styled.div`
  height: 4px;
  background: #fff;
  border-bottom: 2px solid #d0d0d0;
`

const ScrollRow = styled.div`
  display: flex;
  align-items: center;
  justify-content: space-between;
  height: 11px;
  background: #fff;
  font-weight: 700;
  font-size: 10px;
  color: #333;
`

const ScrollThumb = styled.span`
  width: 477px;
  height: 100%;
  line-height: 9px;
  padding-left: 3px;
  box-sizing: border-box;
  background: #c9c9c9;
`

const ScrollEnd = styled.span`
  padding-right: 4px;
  line-height: 9px;
`

const TermTabRow = styled.div`
  display: flex;
  align-items: center;
  height: 17px;
  padding-left: ${(p) => p.$pad}px;
  background: #f6f6f6;
`

const TermTab = styled.span`
  display: flex;
  align-items: center;
  justify-content: center;
  flex: 0 0 ${(p) => p.$w}px;
  height: 12px;
  box-sizing: border-box;
  font-size: 8.3px;
  white-space: nowrap;
  color: ${(p) => (p.$on ? '#222' : '#9a9a9a')};
  ${(p) => (p.$on
    ? 'height: 13px; background: #fff; border-right: 1px solid #555; border-bottom: 1px solid #555; border-left: 1px solid #999;'
    : 'border-right: 1px solid #a8a8a8;')}
`

const Badge = styled.em`
  font-style: normal;
  font-size: 6.6px;
  color: #d03030;
  margin: 4px 0 0 1px;
`

const ExtraLinks = styled.div`
  display: flex;
  align-items: center;
  margin-left: 5px;
`

const ExtraLink = styled.span`
  display: flex;
  align-items: center;
  gap: 1px;
  flex: 0 0 ${(p) => p.$w}px;
  font-size: 8px;
  white-space: nowrap;
  color: ${(p) => (p.$faint ? '#b4b4b4' : '#222')};
  b {
    font-weight: 400;
  }
`

const StatusBar = styled.div`
  display: flex;
  flex: 0 0 17px;
  background: #f0f0f0;
  border-top: 1px solid #a8a8a8;
  box-sizing: border-box;
`

const StatusCell = styled.span`
  display: flex;
  align-items: center;
  flex: 0 0 ${(p) => p.$w}px;
  box-sizing: border-box;
  padding-left: ${(p) => (p.$pad === undefined ? 3 : p.$pad)}px;
  font-size: 7.5px;
  color: #333;
  white-space: nowrap;
  border-right: 1px solid #d0d0d0;
`

const StatusLast = styled.span`
  display: flex;
  align-items: center;
  flex: 1;
  gap: 3px;
  justify-content: ${(p) => (p.$start ? 'flex-start' : 'flex-end')};
  padding: 0 ${(p) => (p.$start ? 0 : 27)}px 0 4px;
  font-size: 7.6px;
  color: #333;
  white-space: nowrap;
`

const Banner = styled.div`
  position: absolute;
  left: 628px;
  top: 542px;
  width: 650px;
  height: 93px;
  box-sizing: border-box;
  padding-right: 4px;
  display: flex;
  align-items: center;
  justify-content: center;
  background: #6a2df0;
  color: #fff;
  font-family: Lato, "Liberation Sans", sans-serif;
  font-weight: 900;
  font-size: 43px;
  letter-spacing: 0.7px;
  white-space: nowrap;
`
